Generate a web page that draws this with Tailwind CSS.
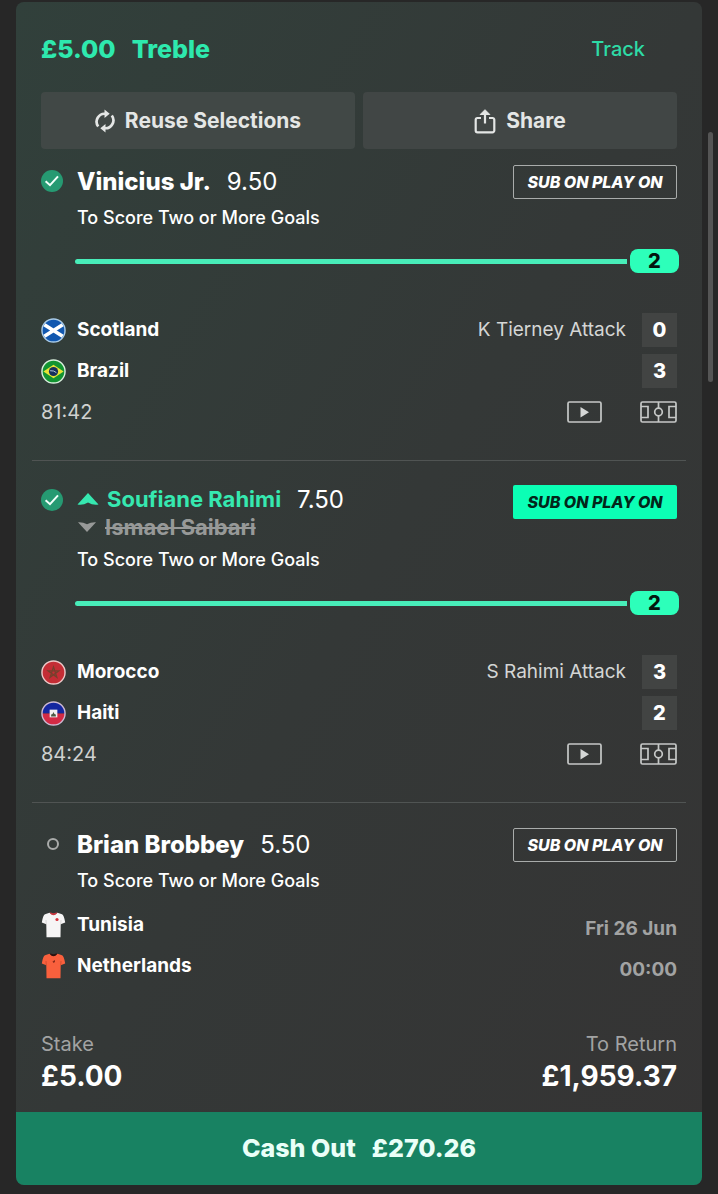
<!DOCTYPE html>
<html lang="en">
<head>
    <meta charset="UTF-8">
    <meta name="viewport" content="width=device-width, initial-scale=1.0">
    <title>My Bets</title>
    <script src="https://cdn.jsdelivr.net/npm/@tailwindcss/browser@4"></script>
</head>
<body class="bg-[#272727] font-['Inter','Liberation_Sans',sans-serif] text-white">
    <!-- Shared icons -->
    <svg class="hidden" xmlns="http://www.w3.org/2000/svg">
        <symbol id="icon-check" viewBox="0 0 22 22">
            <circle cx="11" cy="11" r="11" fill="#269a72"></circle>
            <path d="M4.6 11.2 9 15.2 17 6.4" fill="none" stroke="#f2fffa" stroke-width="2"></path>
        </symbol>
        <symbol id="icon-video" viewBox="0 0 35 22">
            <rect x="1" y="1" width="33" height="20" rx="1.5" fill="none" stroke="#c6c8c7" stroke-width="1.7"></rect>
            <path d="M13.5 6v10.4l8.500-5.200z" fill="#d5d7d6"></path>
        </symbol>
        <symbol id="icon-pitch" viewBox="0 0 37 22">
            <g fill="none" stroke="#c6c8c7" stroke-width="1.7">
                <rect x="1" y="1" width="35" height="20" rx="1.5"></rect>
                <path d="M1 5.500h7v11H1M36 5.500h-7v11h7M18.500 1v6M18.500 15v6"></path>
                <circle cx="18.500" cy="11" r="3.800"></circle>
            </g>
        </symbol>
    </svg>

    <main class="relative px-4 pt-0.5 pb-2">
        <div class="overflow-hidden rounded-lg bg-linear-to-br from-[#31403b] via-[#343837] to-[#353434]">

            <!-- Header -->
            <header class="px-[25px] pt-[29px]">
                <div class="flex items-center justify-between">
                    <h1 class="flex gap-4 text-[25px] font-extrabold leading-9 text-[#2ee9ae]"><span>£5.00</span><span>Treble</span></h1>
                    <a href="#" class="mr-8 text-xl font-medium leading-9 text-[#2edba6]">Track</a>
                </div>
                <div class="mt-[25px] grid grid-cols-2 gap-2">
                    <button type="button" class="flex h-[57px] items-center justify-center gap-2.5 rounded-sm bg-[#414846] text-[21px] font-bold text-[#e4e6e5]">
                        <svg class="h-6 w-5" viewBox="0 0 20 24" fill="none" stroke="#e4e6e5" stroke-width="2.700">
                            <path d="M3.200 17.500A8 8 0 0 1 10.500 4.800M16.800 6.500A8 8 0 0 1 9.500 19.200"></path>
                            <path d="M9.500.5v8.600l5.200-4.300zM10.500 14.900v8.600l-5.200-4.300z" fill="#e4e6e5" stroke="none"></path>
                        </svg>
                        Reuse Selections
                    </button>
                    <button type="button" class="flex h-[57px] items-center justify-center gap-2.5 rounded-sm bg-[#414645] text-[21px] font-bold text-[#e4e6e5]">
                        <svg class="h-[26px] w-[22px]" viewBox="0 0 22 26" fill="none" stroke="#e4e6e5" stroke-width="2.200" stroke-linejoin="round">
                            <path d="M7 10H3.500A1.800 1.800 0 0 0 1.700 11.800V22.500A1.800 1.800 0 0 0 3.500 24.300H18.500A1.800 1.800 0 0 0 20.300 22.500V11.800A1.800 1.800 0 0 0 18.500 10H15M11 15.500V3"></path>
                            <path d="M6.200 6.500 11 1.700 15.800 6.500z" fill="#e4e6e5" stroke-width="1"></path>
                        </svg>
                        Share
                    </button>
                </div>
            </header>

            <!-- Leg 1 -->
            <section class="mx-4 border-b border-[#505453] px-[9px] pt-4 pb-[31px]">
                <div class="flex items-start">
                    <svg class="mt-[5px] mr-3.5 h-[22px] w-[22px]"><use href="#icon-check"></use></svg>
                    <div class="flex flex-1 items-center gap-4 leading-[34px]">
                        <h2 class="text-2xl font-extrabold leading-[34px]">Vinicius Jr.</h2>
                        <span class="text-2xl leading-[34px]">9.50</span>
                    </div>
                    <span class="flex h-[34px] w-[164px] items-center justify-center rounded-xs border border-[#a9acab] text-base font-extrabold italic">SUB ON PLAY ON</span>
                </div>
                <p class="mt-2 pl-9 text-lg font-medium leading-[22px]">To Score Two or More Goals</p>
                <div class="mt-5 -mr-0.5 flex items-center gap-[3px] pl-[34px]">
                    <div class="h-[5px] flex-1 rounded-l-full bg-[#48edb9]"></div>
                    <span class="w-[49px] rounded-lg bg-[#2dffba] text-center text-xl font-extrabold leading-6 text-[#02160f]">2</span>
                </div>

                <div class="mt-10 flex flex-col gap-[7px] text-[19px]">
                    <div class="flex h-[34px] items-center">
                        <svg class="mr-[11px] h-[25px] w-[25px]" viewBox="0 0 26 26">
                            <circle cx="13" cy="13" r="12" fill="#1258b0"></circle>
                            <path d="M3.500 7 22.500 19M3.500 19 22.500 7" stroke="#fff" stroke-width="3.800"></path>
                            <circle cx="13" cy="13" r="12" fill="none" stroke="#a9cbe8" stroke-width="1.500"></circle>
                        </svg>
                        <span class="flex-1 font-bold">Scotland</span>
                        <span class="mr-4 text-[#d4d6d5]">K Tierney Attack</span>
                        <span class="w-[35px] bg-[#424443] text-center text-xl font-extrabold leading-[34px]">0</span>
                    </div>
                    <div class="flex h-[34px] items-center">
                        <svg class="mr-[11px] h-[25px] w-[25px]" viewBox="0 0 26 26">
                            <circle cx="13" cy="13" r="12" fill="#129431" stroke="#d9efdd" stroke-width="1.500"></circle>
                            <path d="M2.500 13 13 6l10.500 7L13 20z" fill="#e6e335"></path>
                            <circle cx="13" cy="13" r="4.800" fill="#17305c"></circle>
                            <path d="M9.500 12.200q4-.4 6.500 2" fill="none" stroke="#b9cbe0" stroke-width="1"></path>
                        </svg>
                        <span class="flex-1 font-bold">Brazil</span>
                        <span class="w-[35px] bg-[#424443] text-center text-xl font-extrabold leading-[34px]">3</span>
                    </div>
                    <div class="flex h-[34px] items-center">
                        <time class="flex-1 text-xl text-[#d0d2d1]">81:42</time>
                        <button type="button" aria-label="Watch live" class="mr-[38px]"><svg class="h-[22px] w-[35px]"><use href="#icon-video"></use></svg></button>
                        <button type="button" aria-label="Match tracker"><svg class="h-[22px] w-[37px]"><use href="#icon-pitch"></use></svg></button>
                    </div>
                </div>
            </section>

            <!-- Leg 2 -->
            <section class="mx-4 border-b border-[#505453] px-[9px] pt-6 pb-[31px]">
                <div class="flex items-start">
                    <svg class="mt-1 mr-3.5 h-[22px] w-[22px]"><use href="#icon-check"></use></svg>
                    <div class="flex flex-1 items-start gap-4 leading-7">
                        <div>
                            <h2 class="flex items-center gap-2 text-[22px] font-bold leading-7 text-[#36e8b0]">
                                <svg class="h-3 w-[22px]" viewBox="0 0 22 12"><path d="M11 0 21.500 11.500Q16 12.500 11 9.500 6 12.500.5 11.500z" fill="#36e8b0"></path></svg>
                                Soufiane Rahimi
                            </h2>
                            <div class="flex items-center gap-2 text-[22px] font-bold leading-7 text-[#979998]">
                                <svg class="h-2.5 w-5" viewBox="0 0 20 10"><path d="M10 10 1 .3Q6 0 10 2.200 14 0 19 .3z" fill="#979998"></path></svg>
                                <s>Ismael Saibari</s>
                            </div>
                        </div>
                        <span class="text-2xl leading-[30px]">7.50</span>
                    </div>
                    <span class="flex h-[34px] w-[164px] items-center justify-center rounded-xs bg-[#0bffb5] text-base font-extrabold italic text-[#02261a]">SUB ON PLAY ON</span>
                </div>
                <p class="mt-2 pl-9 text-lg font-medium leading-[22px]">To Score Two or More Goals</p>
                <div class="mt-5 -mr-0.5 flex items-center gap-[3px] pl-[34px]">
                    <div class="h-[5px] flex-1 rounded-l-full bg-[#48edb9]"></div>
                    <span class="w-[49px] rounded-lg bg-[#2dffba] text-center text-xl font-extrabold leading-6 text-[#02160f]">2</span>
                </div>

                <div class="mt-10 flex flex-col gap-[7px] text-[19px]">
                    <div class="flex h-[34px] items-center">
                        <svg class="mr-[11px] h-[25px] w-[25px]" viewBox="0 0 26 26">
                            <circle cx="13" cy="13" r="12" fill="#c42d35" stroke="#edc9c9" stroke-width="1.500"></circle>
                            <path d="M13 7.200 16.500 18 7.400 11.300H18.600L9.500 18z" fill="none" stroke="#75402c" stroke-width="1.300"></path>
                        </svg>
                        <span class="flex-1 font-bold">Morocco</span>
                        <span class="mr-4 text-[#d4d6d5]">S Rahimi Attack</span>
                        <span class="w-[35px] bg-[#424443] text-center text-xl font-extrabold leading-[34px]">3</span>
                    </div>
                    <div class="flex h-[34px] items-center">
                        <svg class="mr-[11px] h-[25px] w-[25px]" viewBox="0 0 26 26">
                            <path d="M1 13a12 12 0 0 1 24 0z" fill="#1426a0"></path>
                            <path d="M1 13a12 12 0 0 0 24 0z" fill="#d32a45"></path>
                            <rect x="9" y="9" width="8" height="8" fill="#f1f1f1"></rect>
                            <path d="M10.500 16q-.5-2.500 1.500-2.500l1-2 1 2q2 0 1.500 2.500z" fill="#4b5a46"></path>
                            <circle cx="13" cy="13" r="12" fill="none" stroke="#cdb9d3" stroke-width="1.500"></circle>
                        </svg>
                        <span class="flex-1 font-bold">Haiti</span>
                        <span class="w-[35px] bg-[#424443] text-center text-xl font-extrabold leading-[34px]">2</span>
                    </div>
                    <div class="flex h-[34px] items-center">
                        <time class="flex-1 text-xl text-[#d0d2d1]">84:24</time>
                        <button type="button" aria-label="Watch live" class="mr-[38px]"><svg class="h-[22px] w-[35px]"><use href="#icon-video"></use></svg></button>
                        <button type="button" aria-label="Match tracker"><svg class="h-[22px] w-[37px]"><use href="#icon-pitch"></use></svg></button>
                    </div>
                </div>
            </section>

            <!-- Leg 3 -->
            <section class="px-[25px] pt-[25px]">
                <div class="flex items-start">
                    <span class="mt-2.5 mr-[18px] ml-1.5 h-3 w-3 rounded-full border-2 border-[#a9abaa]"></span>
                    <div class="flex flex-1 items-center gap-4 leading-[34px]">
                        <h2 class="text-2xl font-extrabold leading-[34px]">Brian Brobbey</h2>
                        <span class="text-2xl leading-[34px]">5.50</span>
                    </div>
                    <span class="flex h-[34px] w-[164px] items-center justify-center rounded-xs border border-[#a9acab] text-base font-extrabold italic">SUB ON PLAY ON</span>
                </div>
                <p class="mt-2 pl-9 text-lg font-medium leading-[22px]">To Score Two or More Goals</p>

                <div class="mt-4 flex justify-between text-[19px] font-bold">
                    <div class="flex flex-col gap-[7px]">
                        <div class="flex h-[34px] items-center">
                            <svg class="mr-[11px] h-[26px] w-[25px]" viewBox="0 0 25 26">
                                <path d="M8.500.8 4 2.200Q2 3 .8 10.500l4.500 1.800L5.500 25.200h14l.2-12.900 4.500-1.800Q23 3 21 2.200L16.500.8q-4 3-8 0z" fill="#f6f5f5"></path>
                                <path d="M8.500.8q4 5 8 0l-1.200-.4q-2.800 1.500-5.600 0z" fill="#c93840"></path>
                                <circle cx="16" cy="7.500" r="1.600" fill="#d6333c"></circle>
                                <path d="M5.300 12.300 5 8M19.700 12.300 20 8" stroke="#d0cfcf" stroke-width=".8"></path>
                            </svg>
                            Tunisia
                        </div>
                        <div class="flex h-[34px] items-center">
                            <svg class="mr-[11px] h-[26px] w-[25px]" viewBox="0 0 25 26">
                                <path d="M8.500.8 4 2.200Q2 3 .8 10.500l4.500 1.800L5.500 25.200h14l.2-12.900 4.500-1.800Q23 3 21 2.200L16.500.8q-4 3-8 0z" fill="#f9603d"></path>
                                <path d="M8.500.8q4 5 8 0l-1.200-.4q-2.800 1.500-5.600 0z" fill="#2b1210"></path>
                                <path d="M11.500 8.500l2.500-1.500v2l-1.500 1z" fill="#8c2b1b"></path>
                                <path d="M5.300 12.300 5 8M19.700 12.300 20 8" stroke="#c9492d" stroke-width=".8"></path>
                            </svg>
                            Netherlands
                        </div>
                    </div>
                    <div class="flex flex-col gap-[7px] pt-1 text-right leading-[34px] text-[#a2a3a3]">
                        <span>Fri 26 Jun</span>
                        <span>00:00</span>
                    </div>
                </div>
            </section>

            <!-- Stake and return -->
            <dl class="mt-[45px] flex justify-between px-[25px] pb-4">
                <div>
                    <dt class="text-xl leading-6 text-[#a2a3a3]">Stake</dt>
                    <dd class="text-[28px] font-bold leading-10">£5.00</dd>
                </div>
                <div class="text-right">
                    <dt class="text-xl leading-6 text-[#a2a3a3]">To Return</dt>
                    <dd class="text-[28px] font-bold leading-10">£1,959.37</dd>
                </div>
            </dl>

            <button type="button" class="flex h-[73px] w-full items-center justify-center gap-4 bg-[#188262] text-[25px] font-extrabold text-[#eafff8]">
                <span>Cash Out</span><span>£270.26</span>
            </button>
        </div>

        <!-- Scroll thumb -->
        <div class="absolute top-[132px] right-[5px] h-[250px] w-[5px] rounded-full bg-[#555555]"></div>
    </main>
</body>
</html>
